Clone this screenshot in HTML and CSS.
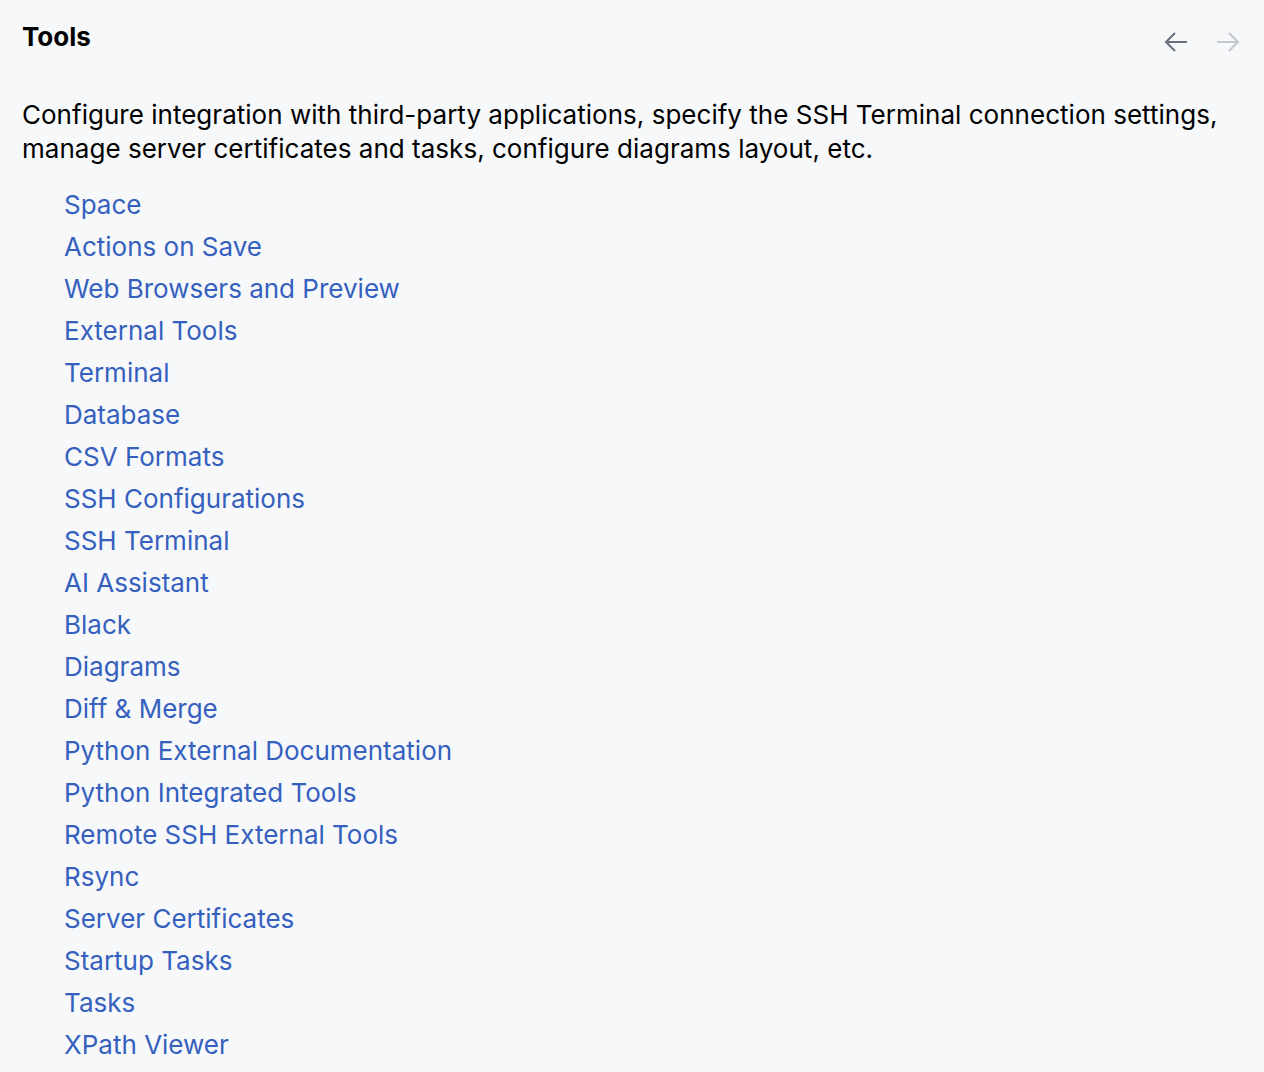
FILE: index.html
```html
<!DOCTYPE html>
<html>
<head>
<meta charset="utf-8">
<link rel="stylesheet" href="styles.css">
</head>
<body>
<div class="page">
  <div class="header">
    <h1 class="title">Tools</h1>
    <div class="nav">
      <svg class="arrow back" width="28" height="28" viewBox="0 0 14 14"><path d="M12.5 7H2M6.5 2.5L2 7l4.5 4.5" fill="none" stroke="currentColor" stroke-width="1"/></svg>
      <svg class="arrow fwd" width="28" height="28" viewBox="0 0 14 14"><path d="M1.5 7H12M7.5 2.5L12 7l-4.5 4.5" fill="none" stroke="currentColor" stroke-width="1"/></svg>
    </div>
  </div>
  <p class="desc">Configure integration with third-party applications, specify the SSH Terminal connection settings, manage server certificates and tasks, configure diagrams layout, etc.</p>
  <ul class="links">
    <li><a>Space</a></li>
    <li><a>Actions on Save</a></li>
    <li><a>Web Browsers and Preview</a></li>
    <li><a>External Tools</a></li>
    <li><a>Terminal</a></li>
    <li><a>Database</a></li>
    <li><a>CSV Formats</a></li>
    <li><a>SSH Configurations</a></li>
    <li><a>SSH Terminal</a></li>
    <li><a>AI Assistant</a></li>
    <li><a>Black</a></li>
    <li><a>Diagrams</a></li>
    <li><a>Diff &amp; Merge</a></li>
    <li><a>Python External Documentation</a></li>
    <li><a>Python Integrated Tools</a></li>
    <li><a>Remote SSH External Tools</a></li>
    <li><a>Rsync</a></li>
    <li><a>Server Certificates</a></li>
    <li><a>Startup Tasks</a></li>
    <li><a>Tasks</a></li>
    <li><a>XPath Viewer</a></li>
  </ul>
</div>
</body>
</html>
```

FILE: styles.css
```css
html, body {
  margin: 0;
  padding: 0;
  background: #F7F8FA;
}
body {
  font-family: Inter, "Noto Sans", sans-serif;
  color: #000;
  overflow: hidden;
}
.page {
  padding: 21px 23px 0 22px;
}
.header {
  display: flex;
  justify-content: space-between;
  align-items: flex-start;
}
.title {
  margin: 0;
  font-size: 26px;
  font-weight: 700;
  line-height: 32px;
}
.nav {
  display: flex;
  gap: 24px;
  margin-top: 7px;
  margin-right: -1px;
}
.arrow { display: block; }
.back { color: #6C707E; }
.fwd { color: #C4C7CF; }
.desc {
  margin: 42px 0 0 0;
  font-size: 26px;
  line-height: 34px;
  letter-spacing: 0.02px;
}
.links {
  list-style: none;
  margin: 18px 0 0 0;
  padding: 0 0 0 42px;
}
.links li {
  font-size: 26px;
  line-height: 42px;
  height: 42px;
}
.links a {
  color: #3560BE;
  cursor: pointer;
}
```
